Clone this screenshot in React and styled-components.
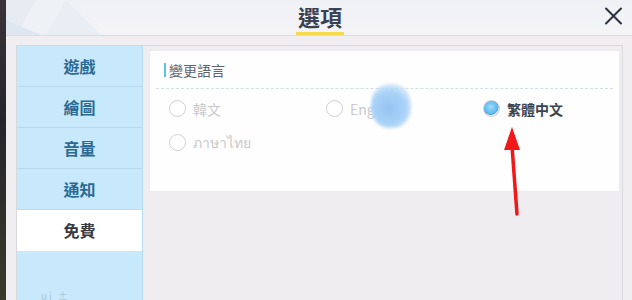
import React from "react";
import styled, { createGlobalStyle } from "styled-components";

const Global = createGlobalStyle`
  html, body { margin: 0; padding: 0; }
  body {
    width: 632px; height: 300px; overflow: hidden;
    font-family: "Noto Sans CJK TC", "Noto Sans", sans-serif;
    background: #2a2a30;
  }
  #root { height: 300px; }
`;

const Page = styled.div`
  display: flex;
  height: 300px;
`;

const DarkEdge = styled.div`
  width: 6px;
  flex: none;
  background: linear-gradient(180deg, #3a3438 0%, #24262c 40%, #3a3a2a 100%);
`;

const Window = styled.div`
  flex: 1;
  display: flex;
  flex-direction: column;
  background: #f0eef1;
  position: relative;
`;

const Header = styled.div`
  height: 35px;
  flex: none;
  position: relative;
  display: flex;
  justify-content: center;
  background: linear-gradient(180deg, #f0f1f5 0%, #f4f4f7 100%);
  border-bottom: 1px solid #dcdde2;
  overflow: hidden;
`;

const HeaderDeco = styled.svg`
  position: absolute;
  left: 0;
  top: 0;
`;

const TitleWrap = styled.div`
  display: flex;
  flex-direction: column;
  align-items: center;
  position: relative;
  margin-left: 2px;
`;

const Title = styled.div`
  font-size: 22px;
  font-weight: 700;
  color: #3a4152;
  line-height: 30px;
  margin-top: 1px;
`;

const TitleBar = styled.div`
  position: absolute;
  top: 32px;
  width: 48px;
  height: 3px;
  background: #f6dc4c;
`;

const Close = styled.svg`
  position: absolute;
  right: 9px;
  top: 7px;
`;

const Body = styled.div`
  flex: 1;
  padding: 9px 9px 0 10px;
  display: flex;
`;

const Frame = styled.div`
  flex: 1;
  display: flex;
  border: 1px solid #d9d8dc;
  border-bottom: none;
  background: #efedf0;
  position: relative;
`;

const Sidebar = styled.div`
  width: 125px;
  flex: none;
  display: flex;
  flex-direction: column;
  background: #c8e8fb;
  border-right: 1px solid #b5dcf3;
`;

const Tab = styled.div`
  height: 40px;
  flex: none;
  display: flex;
  align-items: center;
  justify-content: center;
  font-size: 16px;
  font-weight: 700;
  color: ${(p) => (p.$active ? "#3a3a3e" : "#2b6a94")};
  background: ${(p) => (p.$active ? "#ffffff" : "#c8e8fb")};
  border-bottom: 1px solid ${(p) => (p.$active ? "#ffffff" : "#b9d9ec")};
`;

const Main = styled.div`
  flex: 1;
  padding: 4px 2px 0 6px;
`;

const Card = styled.div`
  background: #fefefe;
  border: 1px solid #eceaee;
  height: 142px;
  box-sizing: border-box;
  padding: 0 6px;
  position: relative;
`;

const Heading = styled.div`
  display: flex;
  align-items: center;
  height: 37px;
  padding-left: 8px;
  border-bottom: 1px dashed #d6dbe4;
  font-size: 14px;
  color: #5c6472;
`;

const HeadBar = styled.span`
  width: 2px;
  height: 14px;
  background: #5cc3e0;
  margin-right: 3px;
`;

const Options = styled.div`
  display: grid;
  grid-template-columns: 157px 157px 1fr;
  row-gap: 17px;
  padding: 11px 0 0 13px;
`;

const Option = styled.div`
  display: flex;
  align-items: center;
  gap: 7px;
  height: 17px;
  font-size: 14px;
  font-weight: ${(p) => (p.$checked ? 700 : 400)};
  color: ${(p) => (p.$checked ? "#3c4452" : "#c9c9cc")};
`;

const Radio = styled.span`
  width: 15px;
  height: 15px;
  border-radius: 50%;
  flex: none;
  border: 1px solid #d0d0d4;
  background: ${(p) =>
    p.$checked
      ? "radial-gradient(circle at 45% 40%, #9fdcff 0%, #5bb8ee 55%, #4aa6e0 62%, #e8e8ec 66%, #f3f3f5 100%)"
      : "#fff"};
`;

const Blob = styled.div`
  position: absolute;
  left: 221px;
  top: 33px;
  width: 40px;
  height: 44px;
  border-radius: 45%;
  background: radial-gradient(circle at 45% 55%, #94c4f3 0%, #a9d2f7 50%, rgba(205, 230, 251, 0.4) 85%, rgba(220, 238, 252, 0) 100%);
  filter: blur(1.5px);
`;

const Arrow = styled.svg`
  position: absolute;
  left: 498px;
  top: 126px;
`;

const Faint = styled.div`
  position: absolute;
  left: 24px;
  bottom: -3px;
  font-size: 10px;
  color: #aac7d8;
  letter-spacing: 2px;
`;

export default function App() {
  return (
    <>
      <Global />
      <Page>
        <DarkEdge />
        <Window>
          <Header>
            <HeaderDeco width="200" height="35" viewBox="0 0 200 35">
              <polygon points="0,0 40,0 20,35 0,35" fill="#e7ebf2" />
              <polygon points="30,0 75,0 55,35 10,35" fill="#eef1f6" />
              <polygon points="60,0 95,35 40,35" fill="#e9eef5" />
              <polygon points="0,20 35,35 0,35" fill="#dde6f1" />
            </HeaderDeco>
            <TitleWrap>
              <Title>選項</Title>
              <TitleBar />
            </TitleWrap>
            <Close width="19" height="18" viewBox="0 0 19 18">
              <path d="M2 1.5 L17 16.5 M17 1.5 L2 16.5" stroke="#2b3142" strokeWidth="2" strokeLinecap="round" />
            </Close>
          </Header>
          <Body>
            <Frame>
              <Sidebar>
                <Tab>遊戲</Tab>
                <Tab>繪圖</Tab>
                <Tab>音量</Tab>
                <Tab>通知</Tab>
                <Tab $active>免費</Tab>
              </Sidebar>
              <Main>
                <Card>
                  <Heading>
                    <HeadBar />
                    變更語言
                  </Heading>
                  <Options>
                    <Option>
                      <Radio />
                      韓文
                    </Option>
                    <Option>
                      <Radio />
                      English
                    </Option>
                    <Option $checked>
                      <Radio $checked />
                      繁體中文
                    </Option>
                    <Option>
                      <Radio />
                      ภาษาไทย
                    </Option>
                  </Options>
                  <Blob />
                </Card>
              </Main>
              <Faint>ui ±</Faint>
            </Frame>
          </Body>
          <Arrow width="30" height="92" viewBox="0 0 30 92">
            <polygon points="8,1 0,24 16,24" fill="#f01818" />
            <path d="M8 20 L13 88" stroke="#f01818" strokeWidth="3.5" strokeLinecap="round" />
          </Arrow>
        </Window>
      </Page>
    </>
  );
}
